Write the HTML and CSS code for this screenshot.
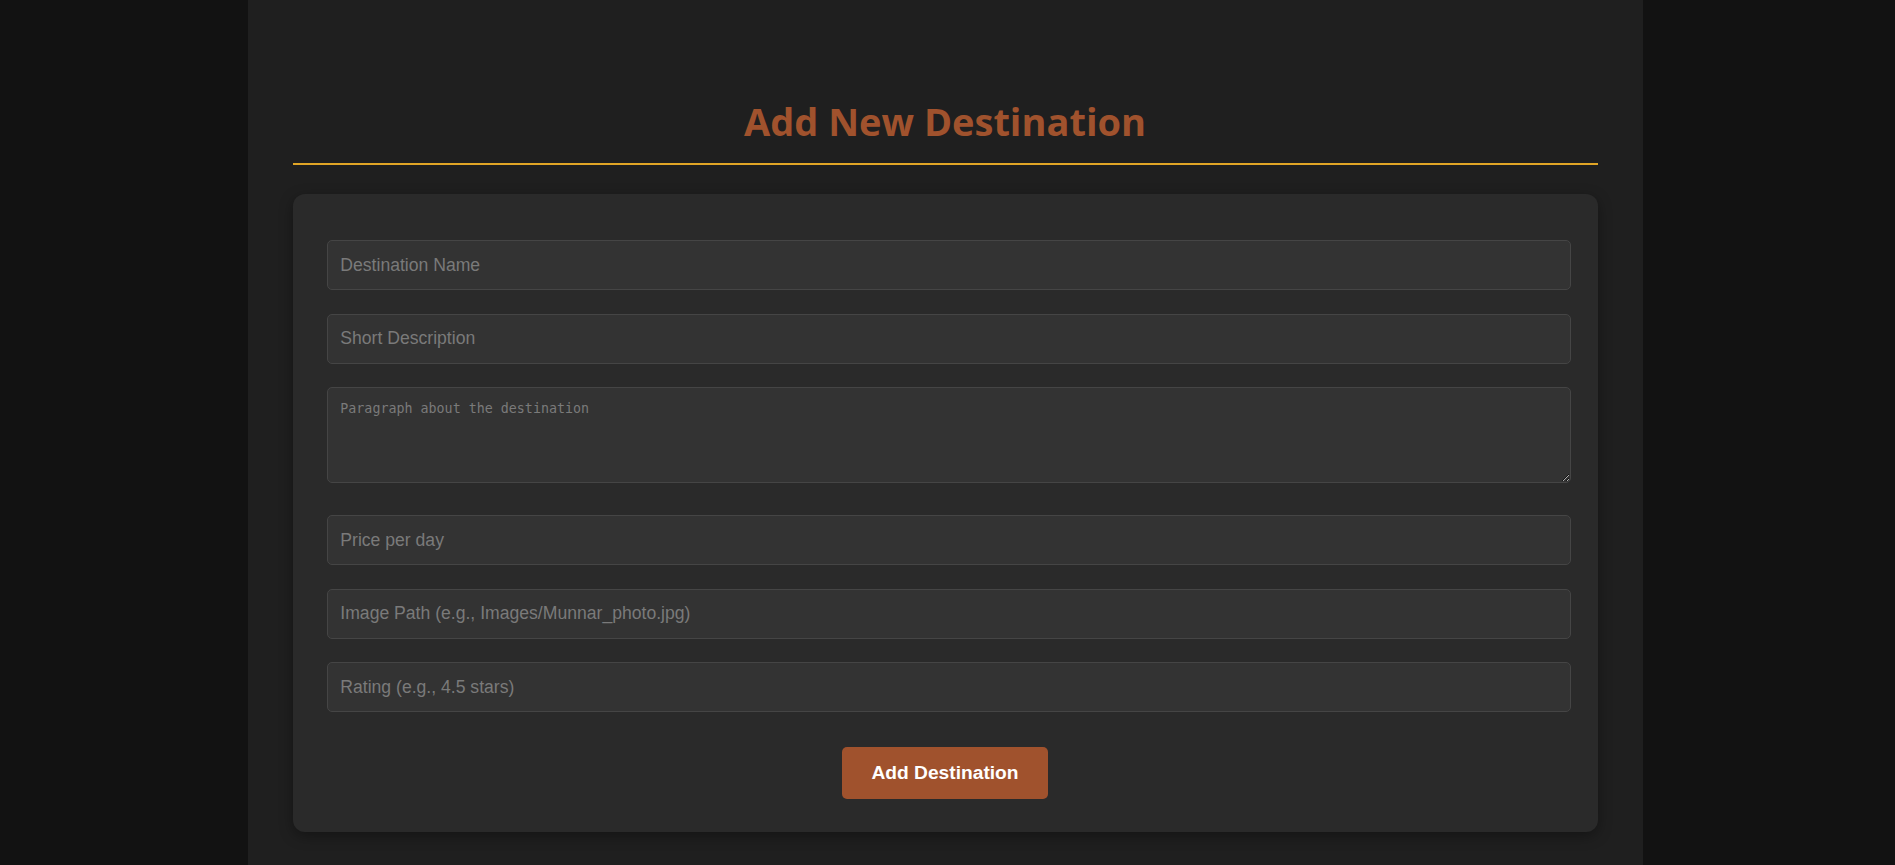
FILE: index.html
```html
<!DOCTYPE html>
<html lang="en">
<head>
<meta charset="UTF-8">
<title>Add New Destination</title>
<link rel="stylesheet" href="styles.css">
</head>
<body>
  <main class="page">
    <h2 class="page-title">Add New Destination</h2>
    <section class="form-card">
      <form class="dest-form">
        <input class="field" type="text" placeholder="Destination Name">
        <input class="field" type="text" placeholder="Short Description">
        <textarea class="field field-area" placeholder="Paragraph about the destination"></textarea>
        <input class="field" type="text" placeholder="Price per day">
        <input class="field" type="text" placeholder="Image Path (e.g., Images/Munnar_photo.jpg)">
        <input class="field" type="text" placeholder="Rating (e.g., 4.5 stars)">
        <button class="submit-btn" type="button">Add Destination</button>
      </form>
    </section>
  </main>
</body>
</html>
```

FILE: styles.css
```css
html, body {
  margin: 0;
  padding: 0;
  height: 100%;
}

body {
  background: #121212;
  font-family: "Liberation Sans", Arial, sans-serif;
  color: #ddd;
}

.page {
  box-sizing: border-box;
  width: 1395px;
  min-height: 100%;
  margin-left: calc(50% - 700px);
  background: #1f1f1f;
  padding: 98px 45px 40px;
}

.page-title {
  margin: 0 0 29px;
  padding-bottom: 19px;
  border-bottom: 2px solid #e0a526;
  text-align: center;
  font-family: "Open Sans", sans-serif;
  font-weight: 700;
  font-size: 38px;
  line-height: 46px;
  color: #a0522d;
}

.form-card {
  background: #2a2a2a;
  border-radius: 12px;
  box-shadow: 0 4px 14px rgba(0, 0, 0, 0.35);
  padding: 46px 34px 33px;
}

.dest-form {
  display: flex;
  flex-direction: column;
  align-items: flex-start;
}

.field {
  box-sizing: border-box;
  display: block;
  width: calc(100% + 7px);
  height: 50px;
  margin: 0 0 23.5px;
  padding: 0 12.8px;
  background: #333333;
  border: 1px solid #454545;
  border-radius: 5px;
  color: #ddd;
  font-family: "Liberation Sans", Arial, sans-serif;
  font-size: 17.6px;
  outline: none;
}

.field::placeholder {
  color: #7a7a7a;
}

.field-area {
  height: 96px;
  margin-bottom: 32px;
  padding: 12.8px;
  font-family: "DejaVu Sans Mono", monospace;
  font-size: 13.333px;
  resize: vertical;
}

.submit-btn {
  align-self: center;
  margin-top: 11px;
  width: 206px;
  height: 52px;
  background: #a0522d;
  color: #ffffff;
  border: none;
  border-radius: 5px;
  font-family: "Liberation Sans", Arial, sans-serif;
  font-weight: 700;
  font-size: 19.2px;
  cursor: pointer;
}
```
